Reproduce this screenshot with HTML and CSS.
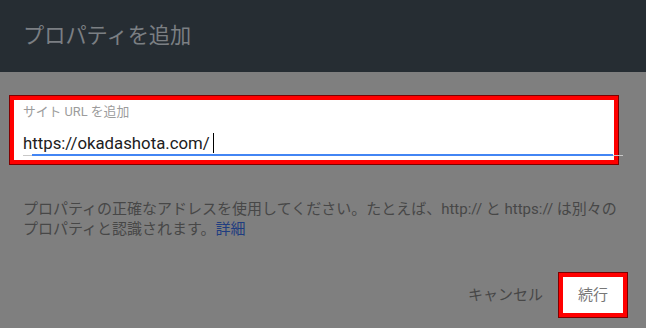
FILE: index.html
```html
<!DOCTYPE html>
<html lang="ja">
<head>
<meta charset="utf-8">
<title>プロパティを追加</title>
<link rel="stylesheet" href="styles.css">
</head>
<body>
<div class="dialog">
  <header class="dialog-header">
    <h1 class="dialog-title">プロパティを追加</h1>
  </header>
  <main class="dialog-body">
    <div class="field highlight">
      <div class="field-label">サイト URL を追加</div>
      <div class="field-input">https://okadashota.com/<span class="caret"></span></div>
      <div class="field-line"><div class="field-line-active"></div></div>
    </div>
    <p class="help">プロパティの正確なアドレスを使用してください。たとえば、http:// と https:// は別々のプロパティと認識されます。<a class="help-link" href="#">詳細</a></p>
    <div class="actions">
      <button class="btn btn-cancel" type="button">キャンセル</button>
      <button class="btn btn-continue highlight" type="button">続行</button>
    </div>
  </main>
</div>
</body>
</html>
```

FILE: styles.css
```css
* { box-sizing: border-box; }
html, body {
  margin: 0;
  padding: 0;
  background: #7f7f7f;
  font-family: Roboto, "Noto Sans CJK JP", sans-serif;
}
.dialog { width: 646px; height: 328px; overflow: hidden; }
.dialog-header {
  height: 72px;
  background: #262d33;
  display: flex;
  align-items: center;
  padding-left: 23px;
}
.dialog-title {
  margin: 0;
  font-weight: 400;
  font-size: 21.2px;
  line-height: 28px;
  color: #7b7f83;
}
.dialog-body {
  padding: 24px 19px 0 10px;
}
.highlight {
  background: #fff;
  border: 4px solid #ff0000;
  box-shadow: 0 0 0 1px #7e0000;
}
.field {
  width: 608px;
  height: 68px;
  padding: 4px 0 0 9px;
}
.field-label {
  font-size: 12.8px;
  line-height: 16px;
  color: #9c9c9c;
  white-space: nowrap;
}
.field-input {
  margin-top: 13px;
  font-size: 16.8px;
  line-height: 20px;
  color: #202020;
  white-space: nowrap;
  display: flex;
  align-items: center;
}
.caret {
  display: inline-block;
  width: 1px;
  height: 20px;
  background: #000;
  margin-left: 3px;
}
.field-line {
  margin-top: 1px;
  margin-right: -9px;
  height: 2px;
  border-bottom: 1px solid #c8c8c8;
  display: flex;
}
.field-line-active {
  margin-left: 9px;
  width: 581px;
  height: 2px;
  flex: none;
  background: #4285f4;
}
.help {
  margin: 35px 0 0 13px;
  width: 600px;
  font-size: 15px;
  line-height: 20px;
  color: #474747;
}
.help-link {
  color: #1f3d80;
  text-decoration: none;
}
.actions {
  margin-top: 34px;
  display: flex;
  justify-content: flex-end;
  align-items: center;
  gap: 8px;
}
.btn {
  font-family: Roboto, "Noto Sans CJK JP", sans-serif;
  font-size: 15px;
  line-height: 20px;
  border: 0;
  background: transparent;
  padding: 0 8px;
  cursor: pointer;
}
.btn-cancel { color: #474747; }
.btn-continue {
  width: 68px;
  height: 44px;
  color: #777;
  background: #fff;
  border: 4px solid #ff0000;
  padding: 0;
}
```
